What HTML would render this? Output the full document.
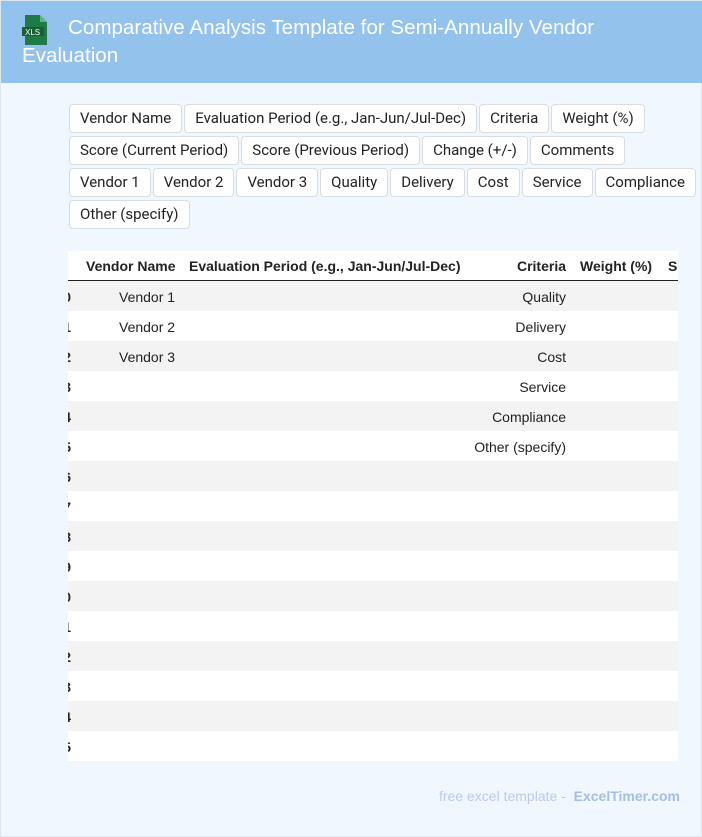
<!DOCTYPE html>
<html><head><meta charset="utf-8"><style>
*{margin:0;padding:0;box-sizing:border-box}
body{width:702px;height:837px;background:#f0f7ff;font-family:"Liberation Sans",Arial,sans-serif;position:relative;overflow:hidden;border:1px solid #dfe6ee}
.hdr{position:absolute;left:0;top:0;width:702px;height:82px;background:#93c2ec;color:#fff;font-size:20.6px;line-height:28px;padding:13px 20px 0 21px}
.tags{position:absolute;left:68px;top:103px;width:634px;display:flex;flex-wrap:wrap;gap:0 2px}
.tag{display:block;background:#fff;border:1px solid #d8dde3;border-radius:4px;height:29px;line-height:27px;padding:0 10px;font-size:15px;color:#222;margin-bottom:3px;font-family:"Roboto","Liberation Sans",sans-serif}
.br{flex-basis:100%;height:0}
.tbl{position:absolute;left:67px;top:250px;width:610px;height:510px;overflow:hidden;background:#fff}
.row{position:absolute;left:0;width:610px;height:30px;font-size:14px;color:#222}
.row span{position:absolute;top:8px;white-space:nowrap}
.h span{font-weight:bold;top:7px}
.g{background:#f3f3f3}
.foot{position:absolute;right:21px;top:787px;font-size:14px;color:#b8caf0}
.foot b{color:#a3bde9}
</style></head><body>
<div class="hdr"><svg width="30" height="32" viewBox="0 0 30 32" style="position:absolute;left:20px;top:13px"><path d="M4 1h15l7 7v23H4z" fill="#1e7b45"/><path d="M19 1v7h7z" fill="#5fb386"/><rect x="1" y="13" width="22" height="9" fill="#175f35"/><text x="4" y="21" font-size="8" fill="#fff" font-family="Liberation Sans">XLS</text></svg><span style="display:inline-block;width:46px"></span>Comparative Analysis Template for Semi-Annually Vendor Evaluation</div>
<div class="tags">
<span class="tag">Vendor Name</span><span class="tag">Evaluation Period (e.g., Jan-Jun/Jul-Dec)</span><span class="tag">Criteria</span><span class="tag">Weight (%)</span><span class="br"></span>
<span class="tag">Score (Current Period)</span><span class="tag">Score (Previous Period)</span><span class="tag">Change (+/-)</span><span class="tag">Comments</span><span class="br"></span>
<span class="tag">Vendor 1</span><span class="tag">Vendor 2</span><span class="tag">Vendor 3</span><span class="tag">Quality</span><span class="tag">Delivery</span><span class="tag">Cost</span><span class="tag">Service</span><span class="tag">Compliance</span><span class="br"></span>
<span class="tag">Other (specify)</span>
</div>
<div class="tbl">
<div class="row h" style="top:0;border-bottom:1px solid #222"><span style="left:18px">Vendor Name</span><span style="left:121px">Evaluation Period (e.g., Jan-Jun/Jul-Dec)</span><span style="right:112px">Criteria</span><span style="left:512px">Weight (%)</span><span style="left:600px">Sc</span></div>
<div id="rows"></div>
</div>
<div class="foot">free excel template - &nbsp;<b>ExcelTimer.com</b></div>
<script>
var c=["Quality","Delivery","Cost","Service","Compliance","Other (specify)"],h="";
for(var i=0;i<16;i++){h+='<div class="row'+(i%2==0?' g':'')+'" style="top:'+(30+i*30)+'px"><span style="right:607px;font-weight:bold">'+i+'</span>'+(i<3?'<span style="left:51px">Vendor '+(i+1)+'</span>':'')+(i<6?'<span style="right:112px">'+c[i]+'</span>':'')+'</div>';}
document.getElementById("rows").outerHTML=h;
</script>
</body></html>
